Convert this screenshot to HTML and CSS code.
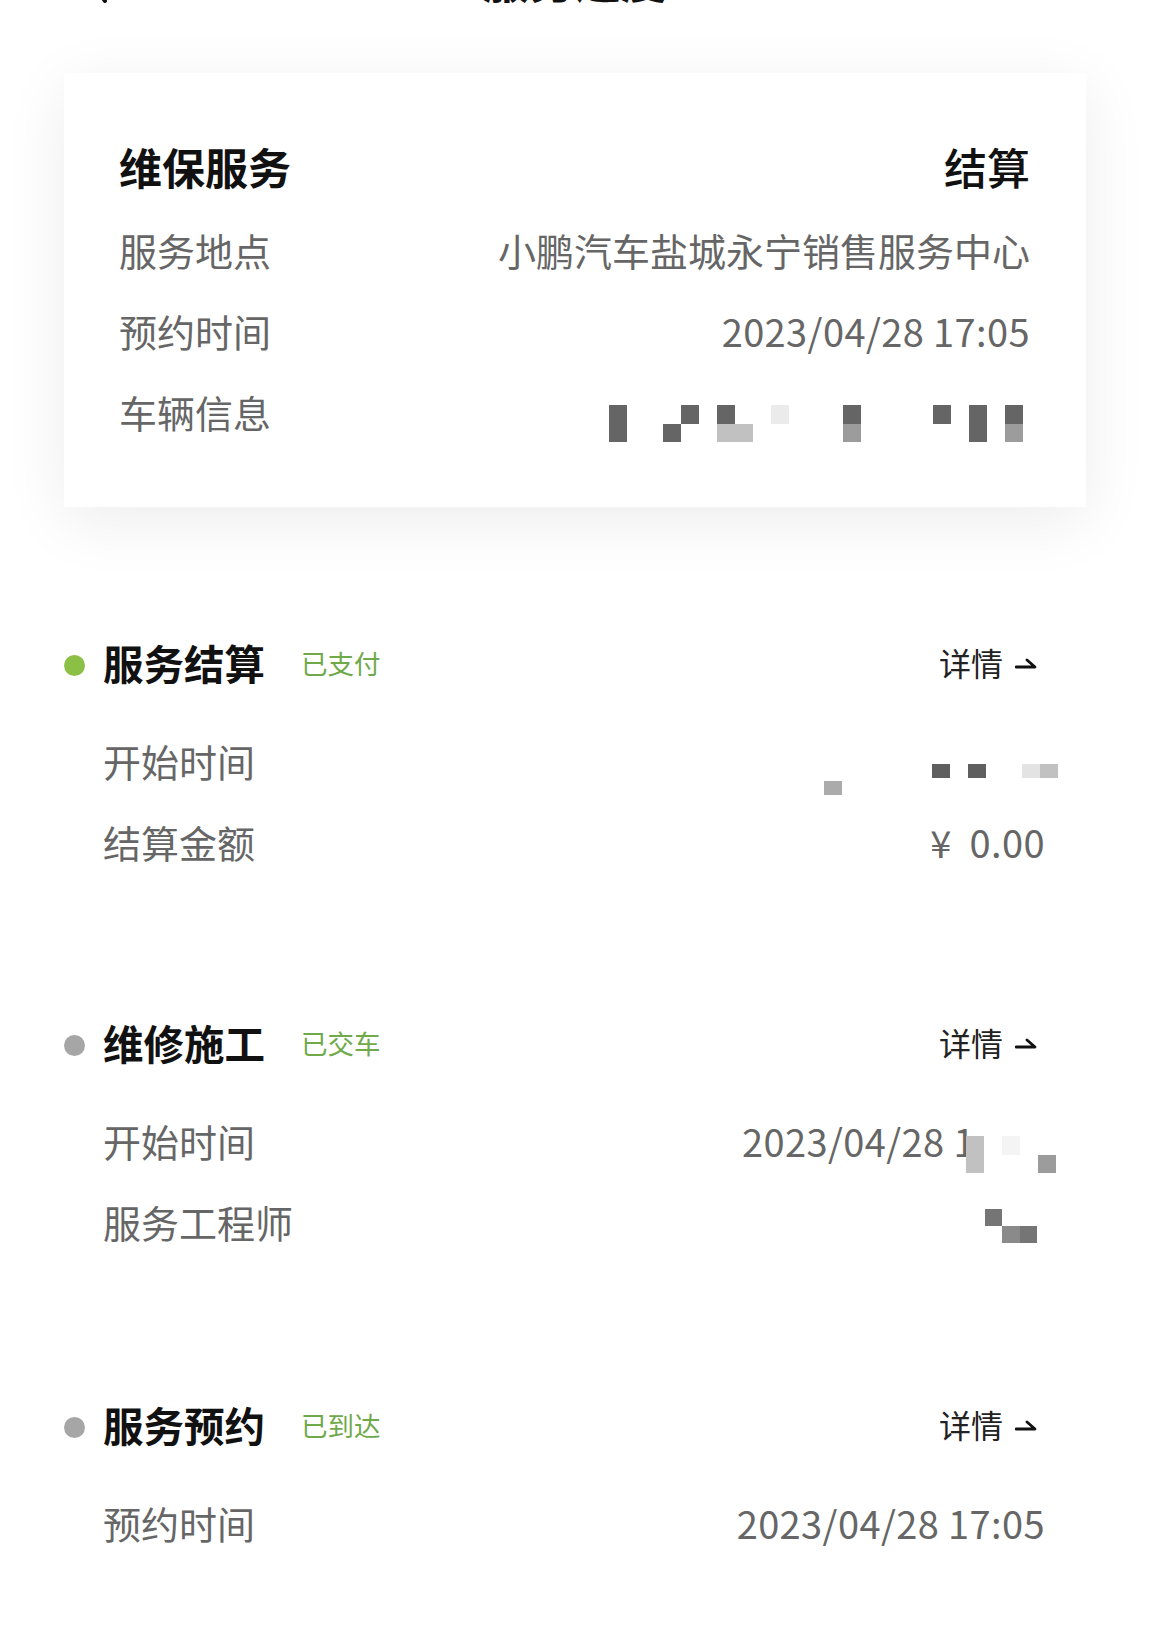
FILE: index.html
```html
<!DOCTYPE html>
<html lang="zh-CN">
<head>
    <meta charset="UTF-8">
    <meta name="viewport" content="width=device-width, initial-scale=1.0">
    <title>服务进度</title>
    <link rel="stylesheet" href="styles.css">
</head>
<body>
    <div class="nav">
        <div class="nav-left">
            <svg class="back" width="30" height="50" viewBox="0 0 30 50">
                <path d="M22 3 L6 24 L22 45" fill="none" stroke="#111" stroke-width="4" stroke-linecap="round" stroke-linejoin="round"/>
            </svg>
        </div>
        <div class="nav-title">服务进度</div>
        <div></div>
    </div>

    <!-- 维保服务卡片 -->
    <div class="card">
        <div class="card-head">
            <span class="card-title">维保服务</span>
            <span class="card-state">结算</span>
        </div>
        <div class="info-row">
            <span>服务地点</span>
            <span>小鹏汽车盐城永宁销售服务中心</span>
        </div>
        <div class="info-row">
            <span>预约时间</span>
            <span class="num">2023/04/28 17:05</span>
        </div>
        <div class="info-row">
            <span>车辆信息</span>
            <div class="mosaic mosaic-car">
                <i class="d"></i><i></i><i></i><i></i><i class="d"></i><i></i><i class="d"></i><i></i><i></i><i class="f"></i><i></i><i></i><i></i><i class="d"></i><i></i><i></i><i></i><i></i><i class="d"></i><i></i><i class="d"></i><i></i><i class="d"></i>
                <i class="d"></i><i></i><i></i><i class="d"></i><i></i><i></i><i class="l"></i><i class="l"></i><i></i><i></i><i></i><i></i><i></i><i class="m"></i><i></i><i></i><i></i><i></i><i></i><i></i><i class="d"></i><i></i><i class="m"></i>
            </div>
        </div>
    </div>

    <!-- 服务结算 -->
    <div class="step">
        <div class="step-head">
            <span class="dot active"></span>
            <span class="step-title">服务结算</span>
            <span class="step-status">已支付</span>
            <span class="more">详情
                <svg width="22" height="14" viewBox="0 0 22 14"><path d="M1 11 H20 L12 4" fill="none" stroke="#111" stroke-width="2.8" stroke-linecap="round" stroke-linejoin="round"/></svg>
            </span>
        </div>
        <div class="step-body">
            <div class="info-row">
                <span>开始时间</span>
                <div class="mosaic mosaic-pay">
                    <i></i><i></i><i></i><i></i><i></i><i></i><i class="d"></i><i></i><i class="d"></i><i></i><i></i><i class="f"></i><i class="l"></i>
                    <i class="m"></i><i></i><i></i><i></i><i></i><i></i><i></i><i></i><i></i><i></i><i></i><i></i><i></i>
                </div>
            </div>
            <div class="info-row">
                <span>结算金额</span>
                <span class="num">¥&nbsp; 0.00</span>
            </div>
        </div>
    </div>

    <!-- 维修施工 -->
    <div class="step">
        <div class="step-head">
            <span class="dot"></span>
            <span class="step-title">维修施工</span>
            <span class="step-status">已交车</span>
            <span class="more">详情
                <svg width="22" height="14" viewBox="0 0 22 14"><path d="M1 11 H20 L12 4" fill="none" stroke="#111" stroke-width="2.8" stroke-linecap="round" stroke-linejoin="round"/></svg>
            </span>
        </div>
        <div class="step-body">
            <div class="info-row">
                <span>开始时间</span>
                <div class="value-mix">
                    <span class="num">2023/04/28 1</span>
                    <div class="mosaic mosaic-work">
                        <i class="l"></i><i></i><i class="f"></i><i></i><i></i>
                        <i class="l"></i><i></i><i></i><i></i><i class="m"></i>
                    </div>
                </div>
            </div>
            <div class="info-row">
                <span>服务工程师</span>
                <div class="mosaic mosaic-eng">
                    <i class="d"></i><i></i><i></i>
                    <i></i><i class="m"></i><i class="d"></i>
                </div>
            </div>
        </div>
    </div>

    <!-- 服务预约 -->
    <div class="step step-last">
        <div class="step-head">
            <span class="dot"></span>
            <span class="step-title">服务预约</span>
            <span class="step-status">已到达</span>
            <span class="more">详情
                <svg width="22" height="14" viewBox="0 0 22 14"><path d="M1 11 H20 L12 4" fill="none" stroke="#111" stroke-width="2.8" stroke-linecap="round" stroke-linejoin="round"/></svg>
            </span>
        </div>
        <div class="step-body">
            <div class="info-row">
                <span>预约时间</span>
                <span class="num">2023/04/28 17:05</span>
            </div>
        </div>
    </div>
</body>
</html>
```

FILE: styles.css
```css
body {
    margin: 0;
    background: #fff;
    font-family: "Noto Sans CJK SC", "Noto Sans", sans-serif;
    color: #111;
    overflow: hidden;
}
.nav {
    display: grid;
    grid-template-columns: 1fr auto 1fr;
    height: 8px;
}
.nav-left {
    padding-left: 83px;
}
.back {
    display: block;
    margin-top: -44px;
}
.nav-title {
    margin-top: -45px;
    font-size: 46px;
    line-height: 46px;
    font-weight: 700;
}
.card {
    margin: 65px 64px 0;
    padding: 65px 56px 55px 55px;
    background: #fff;
    box-shadow: 0 14px 60px rgba(0, 0, 0, 0.075);
}
.card-head {
    display: flex;
    justify-content: space-between;
    align-items: center;
    height: 56px;
    margin-bottom: 15px;
    font-size: 43px;
}
.card-title {
    font-weight: 700;
}
.card-state {
    font-weight: 500;
}
.info-row {
    display: flex;
    justify-content: space-between;
    align-items: center;
    height: 81px;
    font-size: 38px;
    color: #666;
}
.num {
    letter-spacing: 0.4px;
}
.mosaic {
    display: grid;
    align-self: flex-start;
}
.mosaic i {
    display: block;
}
.mosaic .d { background: #656565; }
.mosaic .m { background: #9c9c9c; }
.mosaic .l { background: #c1c1c1; }
.mosaic .f { background: #ebebeb; }
.mosaic-car {
    grid-template-columns: repeat(23, 18px);
    grid-auto-rows: 18.5px;
    margin-top: 34px;
    margin-right: 7px;
}
.mosaic-pay {
    grid-template-columns: repeat(13, 18px);
    grid-auto-rows: 14px;
    row-gap: 3px;
    margin-top: 44px;
    margin-right: -13px;
}
.mosaic-pay .d { background: #5f5f5f; }
.mosaic-pay .f { background: #e3e3e3; }
.mosaic-pay .m { background: #ababab; }
.value-mix {
    display: flex;
    align-items: center;
    align-self: stretch;
    margin-right: -11px;
}
.mosaic-work {
    grid-template-columns: repeat(5, 18px);
    grid-auto-rows: 18.5px;
    margin-top: 36px;
    margin-left: -9px;
}
.mosaic-work .f { background: #f4f4f4; }
.mosaic-eng {
    grid-template-columns: repeat(3, 17.5px);
    grid-auto-rows: 17px;
    margin-top: 28px;
    margin-right: 8px;
}
.mosaic-eng .m { background: #8a8a8a; }
.mosaic-eng .d { background: #757575; }
.step {
    margin: 132px 105px 0 64px;
}
.card + .step {
    margin-top: 127px;
}
.step-last {
    margin-top: 134px;
}
.step-head {
    display: flex;
    align-items: center;
    height: 56px;
}
.dot {
    width: 21px;
    height: 21px;
    border-radius: 50%;
    margin-top: 6px;
    background: #a6a6a6;
}
.dot.active {
    background: #8cbf45;
}
.step-title {
    margin-left: 18px;
    font-size: 40.5px;
    font-weight: 700;
}
.step-status {
    margin-left: 36px;
    font-size: 26.5px;
    color: #6fa94a;
}
.more {
    display: flex;
    align-items: center;
    margin-left: auto;
    margin-right: 8px;
    font-size: 32px;
    color: #222;
}
.more svg {
    margin-left: 12px;
    margin-top: 2px;
}
.step-body {
    margin-top: 30px;
    padding-left: 39px;
}
```
